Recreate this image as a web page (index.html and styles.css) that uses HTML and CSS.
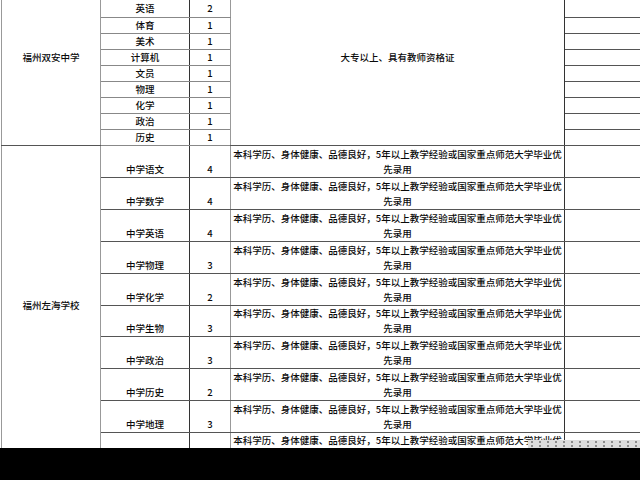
FILE: index.html
```html
<!DOCTYPE html>
<html lang="zh">
<head>
<meta charset="utf-8">
<title>招聘岗位表</title>
<link rel="stylesheet" href="styles.css">
</head>
<body>
<div class="sheet">
<table class="grid">
<colgroup><col class="c-school"><col class="c-subj"><col class="c-num"><col class="c-req"><col class="c-extra"></colgroup>
<tbody class="sec1">
<tr class="first"><td class="school" rowspan="9">福州双安中学</td><td class="subj">英语</td><td class="num">2</td><td class="req" rowspan="9">大专以上、具有教师资格证</td><td class="extra"></td></tr>
<tr><td class="subj">体育</td><td class="num">1</td><td class="extra"></td></tr>
<tr><td class="subj">美术</td><td class="num">1</td><td class="extra"></td></tr>
<tr><td class="subj">计算机</td><td class="num">1</td><td class="extra"></td></tr>
<tr><td class="subj">文员</td><td class="num">1</td><td class="extra"></td></tr>
<tr><td class="subj">物理</td><td class="num">1</td><td class="extra"></td></tr>
<tr><td class="subj">化学</td><td class="num">1</td><td class="extra"></td></tr>
<tr><td class="subj">政治</td><td class="num">1</td><td class="extra"></td></tr>
<tr><td class="subj">历史</td><td class="num">1</td><td class="extra"></td></tr>
</tbody>
<tbody class="sec2">
<tr><td class="school" rowspan="10">福州左海学校</td><td class="subj">中学语文</td><td class="num">4</td><td class="req">本科学历、身体健康、品德良好，5年以上教学经验或国家重点师范大学毕业优<br>先录用</td><td class="extra"></td></tr>
<tr><td class="subj">中学数学</td><td class="num">4</td><td class="req">本科学历、身体健康、品德良好，5年以上教学经验或国家重点师范大学毕业优<br>先录用</td><td class="extra"></td></tr>
<tr><td class="subj">中学英语</td><td class="num">4</td><td class="req">本科学历、身体健康、品德良好，5年以上教学经验或国家重点师范大学毕业优<br>先录用</td><td class="extra"></td></tr>
<tr><td class="subj">中学物理</td><td class="num">3</td><td class="req">本科学历、身体健康、品德良好，5年以上教学经验或国家重点师范大学毕业优<br>先录用</td><td class="extra"></td></tr>
<tr><td class="subj">中学化学</td><td class="num">2</td><td class="req">本科学历、身体健康、品德良好，5年以上教学经验或国家重点师范大学毕业优<br>先录用</td><td class="extra"></td></tr>
<tr><td class="subj">中学生物</td><td class="num">3</td><td class="req">本科学历、身体健康、品德良好，5年以上教学经验或国家重点师范大学毕业优<br>先录用</td><td class="extra"></td></tr>
<tr><td class="subj">中学政治</td><td class="num">3</td><td class="req">本科学历、身体健康、品德良好，5年以上教学经验或国家重点师范大学毕业优<br>先录用</td><td class="extra"></td></tr>
<tr><td class="subj">中学历史</td><td class="num">2</td><td class="req">本科学历、身体健康、品德良好，5年以上教学经验或国家重点师范大学毕业优<br>先录用</td><td class="extra"></td></tr>
<tr><td class="subj">中学地理</td><td class="num">3</td><td class="req">本科学历、身体健康、品德良好，5年以上教学经验或国家重点师范大学毕业优<br>先录用</td><td class="extra"></td></tr>
<tr><td class="subj"></td><td class="num"></td><td class="req top">本科学历、身体健康、品德良好，5年以上教学经验或国家重点师范大学毕业优</td><td class="extra"></td></tr>
</tbody>
</table>
<div class="stamp"></div>
</div>
</body>
</html>
```
FILE: styles.css
```css
html, body {
  margin: 0;
  padding: 0;
  background: #000;
}

.sheet {
  position: relative;
  height: 448px;
  overflow: hidden;
  background: #fff;
  padding-left: 1px;
}

.grid {
  border-collapse: collapse;
  table-layout: fixed;
  width: 663px;
  font-family: "Noto Sans CJK SC", "Noto Sans", sans-serif;
  font-size: 9.5px;
  font-weight: 500;
  color: #0a0a0a;
}

.c-school { width: 99px; }
.c-subj { width: 89px; }
.c-num { width: 41px; }
.c-req { width: 334px; }
.c-extra { width: 100px; }

.grid td {
  border: 1px solid #555;
  padding: 0;
  text-align: center;
  line-height: 15px;
  white-space: nowrap;
  overflow: hidden;
}

.grid td.school {
  border-left-color: #999;
  border-right-color: #999;
}

.grid td.subj {
  border-left-color: #999;
  border-right-color: #333;
}

.grid td.num {
  border-left-color: #333;
  border-right-color: #999;
}

.grid td.req {
  border-left-color: #999;
  border-right-color: #333;
}

.grid td.extra {
  border-left-color: #333;
}

.sec1 tr { height: 16.1px; }
.sec1 tr.first { height: 17px; }
.sec1 td { vertical-align: middle; }
.sec1 td.subj, .sec1 td.num { border-top-color: #888; border-bottom-color: #888; }
.sec1 tr.first td { border-top-style: hidden; }
.sec1 td.school, .sec1 td.req { padding-bottom: 31px; }

.sec2 tr { height: 31.86px; }
.sec2 td { vertical-align: bottom; }
.sec2 td.school { vertical-align: middle; }
.sec2 td.req.top { vertical-align: top; }

.stamp {
  position: absolute;
  left: 528px;
  top: 440px;
  width: 112px;
  height: 8px;
  background-color: #dedede;
  background-image: radial-gradient(circle, #8c8c8c 0.8px, transparent 1.3px);
  background-size: 8px 4px;
}
```
